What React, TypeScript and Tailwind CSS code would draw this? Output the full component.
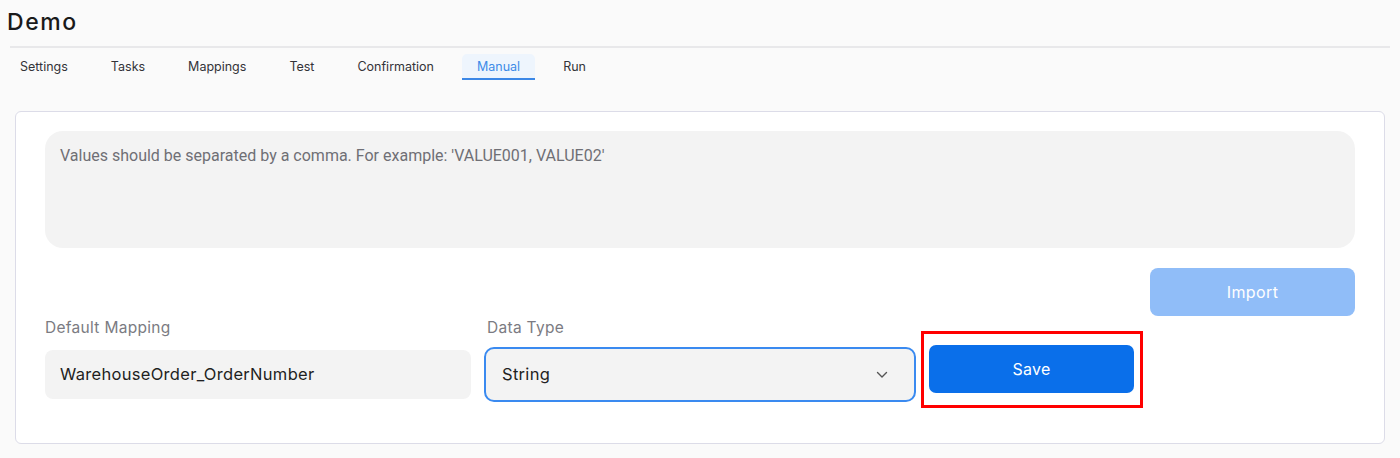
import React from "react";

const tabs = ["Settings", "Tasks", "Mappings", "Test", "Confirmation", "Manual", "Run"];

export default function App() {
  return (
    <div
      className="w-full h-[458px] bg-[#fafafa] overflow-hidden"
      style={{ fontFamily: "Inter, 'Open Sans', sans-serif" }}
    >
      <div className="pt-[8px] pl-[7px]">
        <h1 className="text-[23px] leading-[28px] font-medium text-[#1a1a1a] tracking-[1.6px]">Demo</h1>
      </div>
      <div className="mx-[10px] mt-[10px] h-[2px] bg-[#e8e8ea]" />
      <div className="mt-[6px] pl-[5px] flex gap-[13px]">
        {tabs.map((t) => {
          const active = t === "Manual";
          return (
            <div
              key={t}
              className={
                active
                  ? "h-[26px] px-[15px] flex items-center text-[12.5px] text-[#3d8be8] bg-[#eef5fd] rounded-t-[5px] border-b-2 border-[#3b87e6] pt-[3px]"
                  : "h-[26px] px-[15px] flex items-center text-[12.5px] text-[#333338] pt-[1px]"
              }
            >
              {t}
            </div>
          );
        })}
      </div>
      <div className="mx-[15px] mt-[31px] bg-white border border-[#dcdce8] rounded-[6px] px-[29px] pt-[19px] pb-[41px]">
        <textarea
          className="block w-full h-[117px] resize-none rounded-[18px] bg-[#f3f3f3] px-[15px] pt-[13px] text-[16px] text-[#333] placeholder:text-[#6f6f75] outline-none"
          style={{ fontFamily: "Roboto, 'Liberation Sans', sans-serif" }}
          placeholder="Values should be separated by a comma. For example: 'VALUE001, VALUE02'"
        />
        <div className="mt-[20px] grid grid-cols-6 gap-x-4 gap-y-[2px]">
          <button className="col-start-6 h-[48px] rounded-[8px] bg-[#90bdf8] text-white text-[16px] tracking-[0.4px]">
            Import
          </button>
          <div className="col-span-2 col-start-1">
            <div className="text-[15.5px] leading-[20px] text-[#7b7b82] tracking-[0.3px]">Default Mapping</div>
            <div className="mt-[12px] h-[49px] rounded-[8px] bg-[#f3f3f3] px-[15px] flex items-center text-[16.5px] text-[#1f1f22] tracking-[0.3px]">
              WarehouseOrder_OrderNumber
            </div>
          </div>
          <div className="col-span-2">
            <div className="text-[15.5px] leading-[20px] text-[#7b7b82] tracking-[0.3px]">Data Type</div>
            <div className="mt-[9px] -mx-[3px] h-[55px] rounded-[10px] border-2 border-[#3a8af0] bg-[#f3f3f3] pl-[16px] pr-[26px] flex items-center justify-between text-[16.5px] text-[#1f1f22] tracking-[0.3px]">
              <span>String</span>
              <svg width="12" height="8" viewBox="0 0 12 8" fill="none">
                <path d="M1.5 1.5L6 6L10.5 1.5" stroke="#555" strokeWidth="1.4" strokeLinecap="round" strokeLinejoin="round" />
              </svg>
            </div>
          </div>
          <div className="pt-[27px]">
            <div className="relative">
              <button className="w-full h-[48px] rounded-[7px] bg-[#0a6fea] text-white text-[16px] tracking-[0.3px]">
                Save
              </button>
              <div className="absolute -left-[8px] -right-[9px] -top-[14px] -bottom-[15px] border-[3px] border-[#ff0000] pointer-events-none" />
            </div>
          </div>
        </div>
      </div>
    </div>
  );
}
